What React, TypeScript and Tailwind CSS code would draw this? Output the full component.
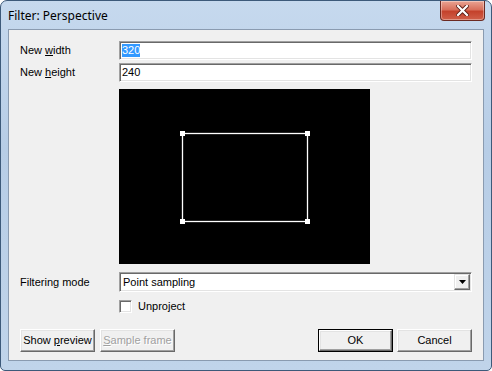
import React from 'react';

const font = { fontFamily: '"Liberation Sans", Arial, sans-serif' };

const Sunken: React.FC<{ className?: string; children?: React.ReactNode }> = ({ className = '', children }) => (
  <div
    className={`bg-white border border-t-[#a0a0a0] border-l-[#a0a0a0] border-b-[#ffffff] border-r-[#ffffff] shadow-[inset_1px_1px_0_#696969,inset_-1px_-1px_0_#e3e3e3] ${className}`}
  >
    {children}
  </div>
);

const Btn: React.FC<{ children: React.ReactNode; disabled?: boolean; isDefault?: boolean }> = ({ children, disabled, isDefault }) => (
  <div className={`h-[23px] w-[75px] ${isDefault ? 'border border-[#000000]' : ''}`}>
    <div
      className={`h-full w-full flex items-center justify-center bg-[#f0f0f0] border border-t-[#ffffff] border-l-[#ffffff] border-b-[#696969] border-r-[#696969] shadow-[inset_-1px_-1px_0_#a0a0a0,inset_1px_1px_0_#e3e3e3] text-[11px] ${
        disabled ? 'text-[#a0a0a0] [text-shadow:1px_1px_0_#ffffff]' : 'text-black'
      }`}
    >
      <span>{children}</span>
    </div>
  </div>
);

export default function App() {
  return (
    <div className="w-[492px] h-[371px] overflow-hidden bg-white" style={font}>
      <div className="w-[492px] h-[371px] rounded-t-[7px] rounded-b-[5px] border border-[#3d5a7a] bg-[linear-gradient(180deg,#c6d9ee_0%,#b7cde6_40%,#c0d4ea_100%)] flex flex-col">
        {/* title bar */}
        <div className="h-[28px] flex items-start justify-between">
          <div className="pl-[7px] pt-[8px] text-[12px] text-black leading-[14px]" style={{ fontFamily: '"Noto Sans", "Liberation Sans", sans-serif' }}>
            Filter: Perspective
          </div>
          <div className="mr-[6px] w-[45px] h-[20px] rounded-b-[4px] border border-t-0 border-[#6b2a22] bg-[linear-gradient(180deg,#e9a493_0%,#d8705c_45%,#c4422c_55%,#d0604a_100%)] flex items-center justify-center shadow-[inset_0_0_0_1px_rgba(255,255,255,0.35)]">
            <svg width="13" height="11" viewBox="0 0 13 11">
              <path d="M2 1 L11 10 M11 1 L2 10" stroke="#5a1d15" strokeWidth="4" strokeLinecap="square" />
              <path d="M2 1 L11 10 M11 1 L2 10" stroke="#ffffff" strokeWidth="2.2" strokeLinecap="square" />
            </svg>
          </div>
        </div>

        {/* client area */}
        <div className="mx-[7px] h-[332px] border border-[#8a9bb0] bg-[#f0f0f0] px-[11px] pt-[11px] text-[11px] text-black">
          <div className="flex items-center h-[19px]">
            <div className="w-[99px]">
              New <span className="underline">w</span>idth
            </div>
            <Sunken className="flex-1 h-[19px] flex items-center pl-[2px]">
              <span className="bg-[#3399ff] text-white leading-[13px]">320</span>
            </Sunken>
          </div>
          <div className="flex items-center h-[19px] mt-[3px]">
            <div className="w-[99px]">
              New <span className="underline">h</span>eight
            </div>
            <Sunken className="flex-1 h-[19px] flex items-center pl-[2px]">
              <span className="leading-[13px]">240</span>
            </Sunken>
          </div>

          <div className="ml-[99px] mt-[7px] w-[251px] h-[175px] bg-black">
            <svg width="251" height="175" viewBox="0 0 251 175">
              <rect x="63.5" y="44.5" width="125" height="88" fill="none" stroke="#ffffff" strokeWidth="1.3" />
              <rect x="61" y="42" width="5" height="5" fill="#ffffff" />
              <rect x="186" y="42" width="5" height="5" fill="#ffffff" />
              <rect x="61" y="130" width="5" height="5" fill="#ffffff" />
              <rect x="186" y="130" width="5" height="5" fill="#ffffff" />
            </svg>
          </div>

          <div className="flex items-center h-[20px] mt-[8px]">
            <div className="w-[99px]">Filtering mode</div>
            <Sunken className="flex-1 h-[20px] flex items-center justify-between pl-[3px] pr-[1px]">
              <span className="leading-[13px]">Point sampling</span>
              <div className="w-[16px] h-[16px] bg-[#f0f0f0] border border-t-[#e3e3e3] border-l-[#e3e3e3] border-b-[#696969] border-r-[#696969] shadow-[inset_-1px_-1px_0_#a0a0a0,inset_1px_1px_0_#ffffff] flex items-center justify-center">
                <svg width="7" height="4" viewBox="0 0 7 4">
                  <path d="M0 0 H7 L3.5 4 Z" fill="#000000" />
                </svg>
              </div>
            </Sunken>
          </div>

          <div className="flex items-center h-[13px] mt-[8px] ml-[99px]">
            <Sunken className="w-[13px] h-[13px]" />
            <span className="ml-[6px]">Unproject</span>
          </div>

          <div className="flex items-center mt-[16px]">
            <Btn>
              Show <span className="underline">p</span>review
            </Btn>
            <div className="w-[5px]" />
            <Btn disabled>
              <span className="underline">S</span>ample frame
            </Btn>
            <div className="flex-1" />
            <Btn isDefault>OK</Btn>
            <div className="w-[4px]" />
            <Btn>Cancel</Btn>
          </div>
        </div>
      </div>
    </div>
  );
}
